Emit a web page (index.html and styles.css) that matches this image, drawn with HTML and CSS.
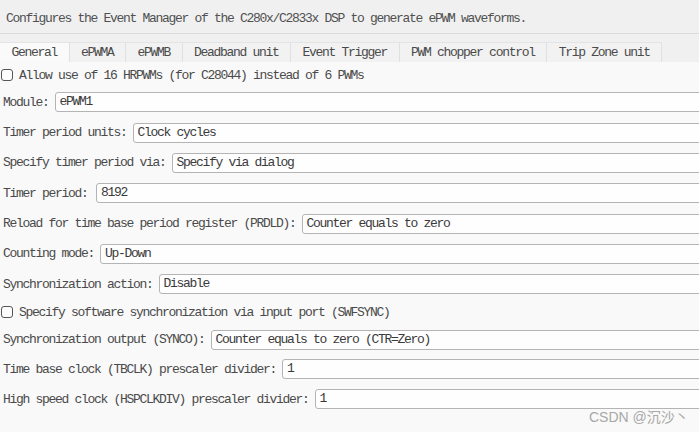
FILE: index.html
```html
<!DOCTYPE html>
<html>
<head>
<meta charset="utf-8">
<link rel="stylesheet" href="styles.css">
</head>
<body>
<div class="top">
  <p class="desc">Configures the Event Manager of the C280x/C2833x DSP to generate ePWM waveforms.</p>
</div>
<div class="tabs">
  <div class="tab active">General</div>
  <div class="tab">ePWMA</div>
  <div class="tab">ePWMB</div>
  <div class="tab">Deadband unit</div>
  <div class="tab">Event Trigger</div>
  <div class="tab">PWM chopper control</div>
  <div class="tab">Trip Zone unit</div>
</div>
<div class="panel">
  <div class="check"><span class="box"></span><span>Allow use of 16 HRPWMs (for C28044) instead of 6 PWMs</span></div>
  <div class="row"><span class="lbl">Module:</span><div class="field">ePWM1</div></div>
  <div class="row"><span class="lbl">Timer period units:</span><div class="field">Clock cycles</div></div>
  <div class="row"><span class="lbl">Specify timer period via:</span><div class="field">Specify via dialog</div></div>
  <div class="row"><span class="lbl">Timer period:</span><div class="field edit">8192</div></div>
  <div class="row"><span class="lbl">Reload for time base period register (PRDLD):</span><div class="field">Counter equals to zero</div></div>
  <div class="row"><span class="lbl">Counting mode:</span><div class="field">Up-Down</div></div>
  <div class="row"><span class="lbl">Synchronization action:</span><div class="field">Disable</div></div>
  <div class="check mid"><span class="box"></span><span>Specify software synchronization via input port (SWFSYNC)</span></div>
  <div class="row"><span class="lbl">Synchronization output (SYNCO):</span><div class="field">Counter equals to zero (CTR=Zero)</div></div>
  <div class="row tight"><span class="lbl">Time base clock (TBCLK) prescaler divider:</span><div class="field">1</div></div>
  <div class="row tight"><span class="lbl">High speed clock (HSPCLKDIV) prescaler divider:</span><div class="field">1</div></div>
</div>
<div class="watermark">CSDN @沉沙丶</div>
</body>
</html>
```

FILE: styles.css
```css
html, body {
  margin: 0;
  padding: 0;
}
body {
  width: 699px;
  height: 432px;
  overflow: hidden;
  position: relative;
  display: flex;
  flex-direction: column;
  background: #f0f0f0;
  font-family: "Liberation Mono", monospace;
  font-size: 13px;
  letter-spacing: -1.3px;
  color: #4a4a4a;
}
.top {
  height: 34px;
  box-sizing: border-box;
  padding: 3px 0 0 6px;
  border-bottom: 1px solid #dadada;
  display: flex;
  align-items: center;
  flex-shrink: 0;
}
.desc {
  margin: 0;
  white-space: pre;
  color: #505050;
}
.tabs {
  display: flex;
  height: 20px;
  margin-top: 8px;
  flex-shrink: 0;
}
.tab {
  box-sizing: border-box;
  height: 20px;
  line-height: 19px;
  padding: 0 11.5px;
  border-top: 1px solid #e4e4e4;
  border-right: 1px solid #e0e0e0;
  background: #f2f2f2;
  white-space: pre;
  color: #4a4a4a;
}
.tab.active {
  background: #fafafa;
}
.panel {
  flex: 1;
  background: #f9f9f9;
  padding: 6px 0 0 3px;
  display: flex;
  flex-direction: column;
  gap: 10.33px;
}
.check {
  display: flex;
  align-items: center;
  height: 14px;
  margin-left: -2px;
  gap: 6px;
  white-space: pre;
}
.check.mid {
  height: 15px;
}
.box {
  width: 12px;
  height: 12px;
  box-sizing: border-box;
  border: 1px solid #555;
  border-radius: 3px;
  background: #fcfcfc;
  flex-shrink: 0;
}
.row {
  display: flex;
  align-items: center;
  height: 20px;
}
.row.tight {
  margin-top: -0.8px;
}
.lbl {
  white-space: pre;
  margin-right: 6px;
}
.field {
  flex: 1;
  height: 20px;
  box-sizing: border-box;
  border: 1px solid #b4b4b4;
  border-radius: 3px;
  background: #fefefe;
  padding-left: 4px;
  line-height: 18px;
  margin-right: -10px;
  color: #3a3a3a;
  white-space: pre;
}
.field.edit {
  margin-left: 2.5px;
}
.watermark {
  position: absolute;
  left: 589px;
  top: 406px;
  font-family: "Liberation Sans", "Noto Sans CJK SC", sans-serif;
  font-size: 14px;
  letter-spacing: 0;
  color: #a8a8a8;
}
```
